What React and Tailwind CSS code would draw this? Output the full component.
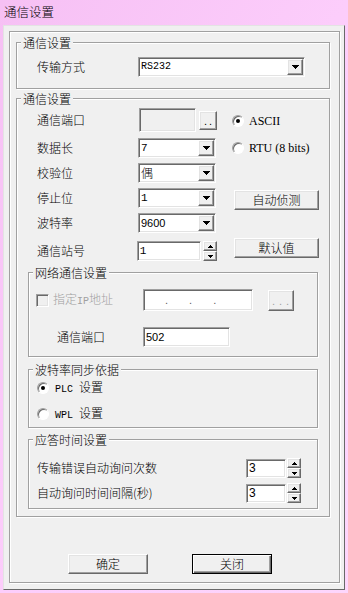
import React from "react";

const sunken =
  "border border-t-[#a0a0a0] border-l-[#a0a0a0] border-r-white border-b-white shadow-[inset_1px_1px_0_#696969,inset_-1px_-1px_0_#e3e3e3]";
const raised =
  "border border-t-white border-l-white border-r-[#696969] border-b-[#696969] shadow-[inset_-1px_-1px_0_#a0a0a0,inset_1px_1px_0_#e3e3e3] bg-[#f0f0f0]";
const defBtn =
  "border border-black shadow-[inset_1px_1px_0_#fff,inset_-1px_-1px_0_#696969,inset_-2px_-2px_0_#a0a0a0] bg-[#f0f0f0]";
const etched = "border border-[#a0a0a0] shadow-[inset_1px_1px_0_#fff,1px_1px_0_#fff]";

const cjk = "font-['Noto_Sans_CJK_SC',sans-serif]";
const mono = "font-['Liberation_Mono',monospace]";
const sans = "font-['Liberation_Sans',sans-serif]";
const serif = "font-['Liberation_Serif',serif]";

function DownArrow() {
  return (
    <svg width="7" height="4" viewBox="0 0 7 4" shapeRendering="crispEdges">
      <path d="M0 0h7v1h-1v1h-1v1h-1v1h-1v-1h-1v-1h-1v-1h-1z" fill="#000" />
    </svg>
  );
}

function SmallUp() {
  return (
    <svg width="5" height="3" viewBox="0 0 5 3" shapeRendering="crispEdges">
      <path d="M2 0h1v1h1v1h1v1H0V2h1V1h1z" fill="#000" />
    </svg>
  );
}

function SmallDown() {
  return (
    <svg width="5" height="3" viewBox="0 0 5 3" shapeRendering="crispEdges">
      <path d="M0 0h5v1h-1v1h-1v1h-1V2H1V1H0z" fill="#000" />
    </svg>
  );
}

function Group({ title, className, children }) {
  return (
    <div className={`relative ${etched} ${className}`}>
      <span className="absolute left-[4px] top-[-8px] bg-[#f0f0f0] px-[2px] text-[12px] leading-[16px]">
        {title}
      </span>
      {children}
    </div>
  );
}

function Combo({ value, w, font }) {
  return (
    <div className={`${w} h-[20px] bg-white ${sunken} p-[1px] flex items-center`}>
      <span className={`flex-1 pl-[1px] leading-[16px] ${font}`}>{value}</span>
      <div className={`w-[16px] h-[16px] ${raised} flex items-center justify-center`}>
        <DownArrow />
      </div>
    </div>
  );
}

function Spin() {
  return (
    <div className="flex flex-col w-[14px] h-[20px]">
      <div className={`h-[10px] ${raised} flex items-center justify-center`}>
        <SmallUp />
      </div>
      <div className={`h-[10px] ${raised} flex items-center justify-center`}>
        <SmallDown />
      </div>
    </div>
  );
}

function Radio({ checked }) {
  return (
    <div className="w-[12px] h-[12px] shrink-0 rounded-full bg-white border border-t-[#a0a0a0] border-l-[#a0a0a0] border-r-white border-b-white shadow-[inset_1px_1px_0_#696969] flex items-center justify-center">
      {checked && <div className="w-[4px] h-[4px] rounded-full bg-black" />}
    </div>
  );
}

function Row({ label, mt, children }) {
  return (
    <div className={`${mt} h-[20px] flex items-center`}>
      <span className="w-[101px] leading-[16px]">{label}</span>
      {children}
    </div>
  );
}

export default function App() {
  return (
    <div
      className={`w-[348px] h-[593px] flex flex-col bg-linear-to-br from-[#f6c0f4] via-[#fccdfb] to-[#fdd6fc] text-black text-[12px] font-light leading-none overflow-hidden ${cjk}`}
    >
      <div className="h-[25px] shrink-0 pl-[4px] pt-[3px] text-[12.5px] leading-[17px]">通信设置</div>
      <div className="ml-[3px] w-[342px] h-[565px] shrink-0 bg-[#f0f0f0] border border-[#e3e3e3] border-r-[#696969] border-b-[#696969] pl-[5px] pt-[5px]">
        <div className={`w-[331px] h-[552px] ${etched} flex flex-col pl-[6px] pt-[10px]`}>
          {/* Group 1 */}
          <Group title="通信设置" className="w-[314px] h-[47px] shrink-0">
            <div className="mt-[14px] pl-[20px] flex items-center h-[20px]">
              <span className="w-[101px] leading-[16px]">传输方式</span>
              <Combo w="w-[167px]" value="RS232" font={`${mono} text-[10px] font-normal`} />
            </div>
          </Group>

          {/* Group 2 */}
          <Group title="通信设置" className="mt-[9px] w-[314px] h-[419px] shrink-0">
            <div className="flex pl-[20px] pt-[9px]">
              <div className="w-[180px] shrink-0 flex flex-col">
                <div className="h-[24px] flex items-center">
                  <span className="w-[102px] leading-[16px]">通信端口</span>
                  <div className={`w-[57px] h-[24px] bg-[#f0f0f0] ${sunken}`} />
                  <div
                    className={`ml-[3px] w-[18px] h-[19px] ${raised} flex items-end justify-center pb-[4px] ${sans} font-normal text-[11px] leading-[8px] tracking-[2px] pl-[2px]`}
                  >
                    ..
                  </div>
                </div>
                <Row label="数据长" mt="mt-[6px]">
                  <Combo w="w-[78px]" value="7" font={`${mono} text-[11px] font-normal`} />
                </Row>
                <Row label="校验位" mt="mt-[5px]">
                  <Combo w="w-[78px]" value="偶" font="text-[12px]" />
                </Row>
                <Row label="停止位" mt="mt-[5px]">
                  <Combo w="w-[78px]" value="1" font={`${mono} text-[11px] font-normal`} />
                </Row>
                <Row label="波特率" mt="mt-[5px]">
                  <Combo w="w-[78px]" value="9600" font={`${sans} text-[11px] font-normal`} />
                </Row>
                <Row label="通信站号" mt="mt-[8px]">
                  <div className={`w-[65px] h-[20px] bg-white ${sunken} pl-[2px] flex items-center ${mono} font-normal text-[11px]`}>
                    1
                  </div>
                  <div className="ml-[2px]">
                    <Spin />
                  </div>
                </Row>
              </div>

              <div className="ml-[15px] flex flex-col">
                <div className="mt-[5px] h-[16px] flex items-center">
                  <Radio checked />
                  <span className={`ml-[5px] ${serif} font-normal text-[12px] leading-[16px]`}>ASCII</span>
                </div>
                <div className="mt-[11px] h-[16px] flex items-center">
                  <Radio />
                  <span className={`ml-[5px] ${serif} font-normal text-[12px] leading-[16px]`}>RTU (8 bits)</span>
                </div>
                <div className={`mt-[34px] ml-[2px] w-[85px] h-[20px] ${raised} flex items-center justify-center leading-[16px]`}>
                  自动侦测
                </div>
                <div className={`mt-[28px] ml-[2px] w-[85px] h-[20px] ${raised} flex items-center justify-center leading-[16px]`}>
                  默认值
                </div>
              </div>
            </div>

            {/* 网络通信设置 */}
            <Group title="网络通信设置" className="mt-[11px] ml-[11px] w-[290px] h-[85px]">
              <div className="mt-[16px] h-[22px] flex items-center">
                <div className={`ml-[7px] w-[13px] h-[13px] shrink-0 bg-[#f0f0f0] ${sunken}`} />
                <span className="ml-[4px] w-[90px] text-[#a0a0a0] leading-[16px]">
                  指定<span className={`${mono} font-normal text-[10px]`}>IP</span>地址
                </span>
                <div className={`w-[110px] h-[22px] bg-white ${sunken} flex items-center pl-[21px] gap-[21px] ${sans} font-normal text-[11px] text-[#606060] leading-[10px]`}>
                  <span>.</span>
                  <span>.</span>
                  <span>.</span>
                </div>
                <div
                  className={`ml-[15px] w-[26px] h-[21px] ${raised} flex items-end justify-center pb-[5px] pl-[3px] ${sans} font-normal text-[11px] leading-[8px] tracking-[4px] text-[#a0a0a0]`}
                >
                  ...
                </div>
              </div>
              <div className="mt-[16px] h-[20px] flex items-center">
                <span className="ml-[28px] w-[86px] leading-[16px]">通信端口</span>
                <div className={`w-[87px] h-[20px] bg-white ${sunken} pl-[2px] flex items-center ${sans} font-normal text-[11px]`}>
                  502
                </div>
              </div>
            </Group>

            {/* 波特率同步依据 */}
            <Group title="波特率同步依据" className="mt-[12px] ml-[11px] w-[290px] h-[59px]">
              <div className="mt-[10px] h-[16px] flex items-center">
                <div className="ml-[8px]">
                  <Radio checked />
                </div>
                <span className="ml-[6px] leading-[16px]">
                  <span className={`${mono} font-normal text-[10px]`}>PLC </span>设置
                </span>
              </div>
              <div className="mt-[10px] h-[16px] flex items-center">
                <div className="ml-[8px]">
                  <Radio />
                </div>
                <span className="ml-[6px] leading-[16px]">
                  <span className={`${mono} font-normal text-[10px]`}>WPL </span>设置
                </span>
              </div>
            </Group>

            {/* 应答时间设置 */}
            <Group title="应答时间设置" className="mt-[11px] ml-[11px] w-[290px] h-[70px]">
              <div className="mt-[18px] h-[20px] flex items-center">
                <span className="ml-[8px] w-[209px] leading-[16px]">传输错误自动询问次数</span>
                <div className={`w-[40px] h-[19px] bg-white ${sunken} pl-[2px] flex items-center ${sans} font-normal text-[12px]`}>3</div>
                <div className="ml-[1px]">
                  <Spin />
                </div>
              </div>
              <div className="mt-[5px] h-[20px] flex items-center">
                <span className="ml-[8px] w-[209px] leading-[16px]">自动询问时间间隔(秒)</span>
                <div className={`w-[40px] h-[19px] bg-white ${sunken} pl-[2px] flex items-center ${sans} font-normal text-[12px]`}>3</div>
                <div className="ml-[1px]">
                  <Spin />
                </div>
              </div>
            </Group>
          </Group>

          {/* Bottom buttons */}
          <div className="mt-[37px] flex">
            <div className={`ml-[52px] w-[80px] h-[20px] ${raised} flex items-center justify-center leading-[16px]`}>
              确定
            </div>
            <div className={`ml-[44px] w-[80px] h-[20px] ${defBtn} flex items-center justify-center leading-[16px]`}>
              关闭
            </div>
          </div>
        </div>
      </div>
    </div>
  );
}
